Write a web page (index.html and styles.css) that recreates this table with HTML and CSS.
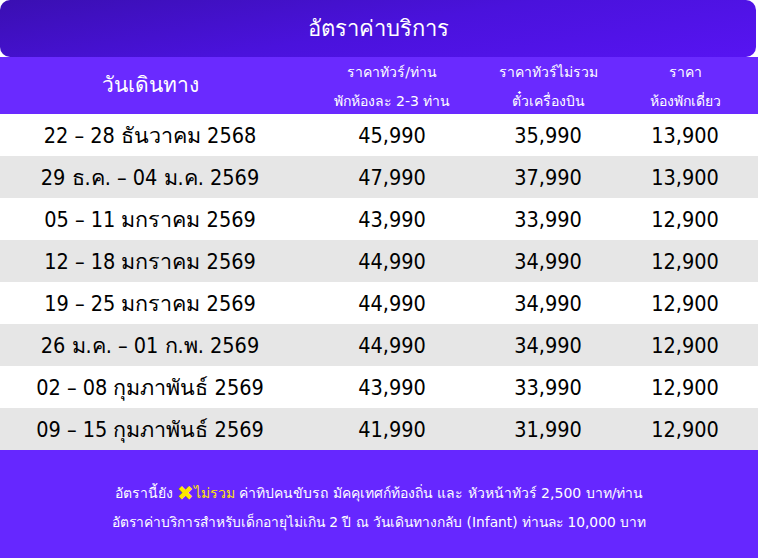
FILE: index.html
```html
<!DOCTYPE html>
<html lang="th">
<head>
<meta charset="utf-8">
<link rel="stylesheet" href="styles.css">
</head>
<body>
<div class="page">
  <div class="title">อัตราค่าบริการ</div>
  <div class="grid head">
    <div class="hcell big">วันเดินทาง</div>
    <div class="hcell"><span>ราคาทัวร์/ท่าน</span><span>พักห้องละ 2-3 ท่าน</span></div>
    <div class="hcell"><span>ราคาทัวร์ไม่รวม</span><span>ตั๋วเครื่องบิน</span></div>
    <div class="hcell"><span>ราคา</span><span>ห้องพักเดี่ยว</span></div>
  </div>
  <div class="grid row"><div>22 – 28 ธันวาคม 2568</div><div>45,990</div><div>35,990</div><div>13,900</div></div>
  <div class="grid row alt"><div>29 ธ.ค. – 04 ม.ค. 2569</div><div>47,990</div><div>37,990</div><div>13,900</div></div>
  <div class="grid row"><div>05 – 11 มกราคม 2569</div><div>43,990</div><div>33,990</div><div>12,900</div></div>
  <div class="grid row alt"><div>12 – 18 มกราคม 2569</div><div>44,990</div><div>34,990</div><div>12,900</div></div>
  <div class="grid row"><div>19 – 25 มกราคม 2569</div><div>44,990</div><div>34,990</div><div>12,900</div></div>
  <div class="grid row alt"><div>26 ม.ค. – 01 ก.พ. 2569</div><div>44,990</div><div>34,990</div><div>12,900</div></div>
  <div class="grid row"><div>02 – 08 กุมภาพันธ์ 2569</div><div>43,990</div><div>33,990</div><div>12,900</div></div>
  <div class="grid row alt"><div>09 – 15 กุมภาพันธ์ 2569</div><div>41,990</div><div>31,990</div><div>12,900</div></div>
  <div class="foot">
    <p>อัตรานี้ยัง <span class="x">✖</span><span class="yel">ไม่รวม</span> ค่าทิปคนขับรถ มัคคุเทศก์ท้องถิ่น และ หัวหน้าทัวร์ 2,500 บาท/ท่าน</p>
    <p class="l2">อัตราค่าบริการสำหรับเด็กอายุไม่เกิน 2 ปี ณ วันเดินทางกลับ (Infant) ท่านละ 10,000 บาท</p>
  </div>
</div>
</body>
</html>
```
FILE: styles.css
```css
* { box-sizing: border-box; }
html, body { margin: 0; padding: 0; background: #ffffff; }
body { font-family: Tahoma, "DejaVu Sans", "Noto Sans", sans-serif; }
.page { width: 758px; height: 558px; display: flex; flex-direction: column; }
.title {
  width: 756px; height: 57px; border-radius: 10px;
  background: linear-gradient(170deg, #3a0fb2 0%, #4a12dc 50%, #5714f2 100%);
  color: #fff; font-size: 22px; display: flex; align-items: center; justify-content: center;
  font-family: "DejaVu Sans Condensed", "DejaVu Sans", sans-serif;
}
.grid { display: grid; grid-template-columns: 300px 184px 128px 146px; }
.head { height: 57px; background: #6a2aff; color: #fff; }
.hcell { display: flex; flex-direction: column; align-items: center; justify-content: space-between; font-size: 14px; padding: 4px 0 2px; }
.hcell.big { font-size: 21px; justify-content: center; font-family: "DejaVu Sans Condensed", "DejaVu Sans", sans-serif; padding: 0 0 2px; }
.row { height: 42px; background: #fff; color: #000; font-size: 21.5px; align-items: center; font-family: "DejaVu Sans Condensed", "DejaVu Sans", sans-serif; }
.row.alt { background: #e6e6e6; }
.row > div { text-align: center; }
.foot { flex: 1; background: #6627ff; color: #fff; font-size: 14px; display: flex; flex-direction: column; justify-content: center; align-items: center; gap: 7px; padding-top: 6px; }
.foot p { margin: 0; line-height: 22px; }
.foot .l2 { font-size: 13.8px; }
.x { color: #ffe600; font-size: 20px; line-height: 1; vertical-align: -2px; }
.yel { color: #ffe600; }
```
